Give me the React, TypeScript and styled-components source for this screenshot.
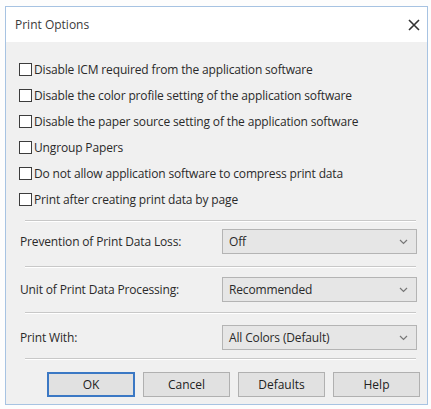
import React from 'react'
import styled, { createGlobalStyle } from 'styled-components'

const GlobalStyle = createGlobalStyle`
  html, body {
    margin: 0;
    padding: 0;
    background: #fdfdfd;
  }
  body {
    font-family: "Open Sans", "Noto Sans", "Liberation Sans", sans-serif;
    color: #2a2a2a;
  }
`

const checks = [
  'Disable ICM required from the application software',
  'Disable the color profile setting of the application software',
  'Disable the paper source setting of the application software',
  'Ungroup Papers',
  'Do not allow application software to compress print data',
  'Print after creating print data by page',
]

// top / bottom spacing of each select row, read off the dialog
const selects = [
  { label: 'Prevention of Print Data Loss:', value: 'Off', top: 7, bottom: 12 },
  { label: 'Unit of Print Data Processing:', value: 'Recommended', top: 9, bottom: 10 },
  { label: 'Print With:', value: 'All Colors (Default)', top: 11, bottom: 8 },
]

const buttons = ['OK', 'Cancel', 'Defaults', 'Help']

const App: React.FC = () => {
  return (
    <>
      <GlobalStyle />
      <StyledWindow>
        <StyledTitleBar>
          <StyledTitle>Print Options</StyledTitle>
          <StyledClose>
            <svg width="12" height="12" viewBox="0 0 12 12">
              <path d="M1 1 L11 11 M11 1 L1 11" stroke="#333" strokeWidth="1.6" fill="none" />
            </svg>
          </StyledClose>
        </StyledTitleBar>
        <StyledBody>
          <StyledCheckList>
            {checks.map((c) => (
              <StyledCheckRow key={c}>
                <StyledBox />
                <span>{c}</span>
              </StyledCheckRow>
            ))}
          </StyledCheckList>
          <StyledSeparator $gap={8} />
          {selects.map((s) => (
            <React.Fragment key={s.label}>
              <StyledSelectRow $top={s.top} $bottom={s.bottom}>
                <StyledLabel>{s.label}</StyledLabel>
                <StyledSelect>
                  <span>{s.value}</span>
                  <svg width="9" height="6" viewBox="0 0 9 6">
                    <path d="M1 1 L4.5 4.5 L8 1" stroke="#777" strokeWidth="1.2" fill="none" />
                  </svg>
                </StyledSelect>
              </StyledSelectRow>
              <StyledSeparator />
            </React.Fragment>
          ))}
          <StyledButtons>
            {buttons.map((b) => (
              <StyledButton key={b} $primary={b === 'OK'}>{b}</StyledButton>
            ))}
          </StyledButtons>
        </StyledBody>
      </StyledWindow>
    </>
  )
}

const StyledWindow = styled.div`
  margin: 6px 3px 0 5px;
  width: 421px;
  border: 1px solid #a7c3e2;
  background: #f0f0f0;
`

const StyledTitleBar = styled.div`
  height: 35px;
  background: #ffffff;
  display: flex;
  align-items: center;
  justify-content: space-between;
  padding: 0 7px 0 9px;
`

const StyledTitle = styled.span`
  font-size: 12px;
  color: #3a3a3a;
`

const StyledClose = styled.span`
  display: flex;
  align-items: center;
`

const StyledBody = styled.div`
  padding: 14px 7px 7px 13px;
`

const StyledCheckList = styled.div`
  display: flex;
  flex-direction: column;
`

const StyledCheckRow = styled.div`
  display: flex;
  align-items: center;
  gap: 2px;
  height: 26px;
  font-size: 12px;
  letter-spacing: -0.15px;
`

const StyledBox = styled.span`
  width: 11px;
  height: 11px;
  border: 1px solid #3c3c3c;
  background: #ffffff;
  flex: none;
`

const StyledSeparator = styled.div<{ $gap?: number }>`
  height: 1px;
  margin: ${(p) => p.$gap ?? 0}px 4px 0 6px;
  background: #c8c8c8;
  border-bottom: 1px solid #ffffff;
`

const StyledSelectRow = styled.div<{ $top: number; $bottom: number }>`
  display: grid;
  grid-template-columns: 202px 1fr;
  align-items: center;
  padding: ${(p) => p.$top}px 3px ${(p) => p.$bottom}px 1px;
`

const StyledLabel = styled.span`
  font-size: 12px;
  letter-spacing: -0.15px;
`

const StyledSelect = styled.div`
  height: 23px;
  border: 1px solid #b4b4b4;
  background: #e6e6e6;
  display: flex;
  align-items: center;
  justify-content: space-between;
  padding: 0 8px 0 6px;
  font-size: 12px;
  letter-spacing: -0.15px;
`

const StyledButtons = styled.div`
  display: flex;
  justify-content: flex-end;
  gap: 8px;
  padding-top: 12px;
`

const StyledButton = styled.div<{ $primary?: boolean }>`
  width: ${(p) => (p.$primary ? 84 : 85)}px;
  height: ${(p) => (p.$primary ? 21 : 23)}px;
  border: ${(p) => (p.$primary ? '2px solid #3b78c4' : '1px solid #b0b0b0')};
  background: #e1e1e1;
  display: flex;
  align-items: center;
  justify-content: center;
  font-size: 12px;
  color: #222;
`

export default App
